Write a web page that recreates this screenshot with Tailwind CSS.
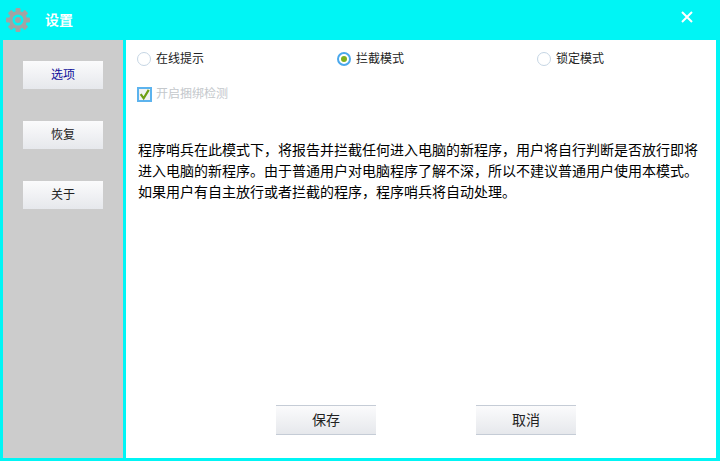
<!DOCTYPE html>
<html lang="zh-CN">
<head>
    <meta charset="UTF-8">
    <title>设置</title>
    <script src="https://cdn.jsdelivr.net/npm/@tailwindcss/browser@4"></script>
</head>
<body class="bg-[#00f5f5] font-['Liberation_Sans','Noto_Sans_CJK_SC',sans-serif] text-[12px] text-black overflow-hidden">
    <div class="w-[720px] h-[461px] flex flex-col pl-[3px] pr-[4px] pb-[3px]">
        <!-- Title bar -->
        <div class="h-[40px] shrink-0 flex items-center -ml-[3px] -mr-[4px]">
            <svg class="w-[24px] h-[24px] ml-[6px]" viewBox="0 0 24 24">
                <g fill="#a3a3a3">
                    <rect x="9.5" y="0" width="5" height="24" rx="1"/>
                    <rect x="9.5" y="0" width="5" height="24" rx="1" transform="rotate(45 12 12)"/>
                    <rect x="9.5" y="0" width="5" height="24" rx="1" transform="rotate(90 12 12)"/>
                    <rect x="9.5" y="0" width="5" height="24" rx="1" transform="rotate(135 12 12)"/>
                </g>
                <circle cx="12" cy="12" r="7" fill="none" stroke="#a3a3a3" stroke-width="4"/>
                <circle cx="12" cy="12" r="5.5" fill="#00f5f5"/>
                <circle cx="12" cy="12" r="3" fill="#a3a3a3"/>
            </svg>
            <span class="ml-[15px] text-[14px] font-bold text-white">设置</span>
            <svg class="w-[12px] h-[12px] ml-auto mr-[27px] -mt-[6px]" viewBox="0 0 12 12">
                <path d="M1 1 L11 11 M11 1 L1 11" stroke="#fff" stroke-width="2"/>
            </svg>
        </div>

        <div class="flex-1 flex min-h-0">
            <!-- Sidebar -->
            <div class="w-[120px] shrink-0 bg-[#cccccc] flex flex-col items-center pt-[21px] gap-[32px]">
                <button class="w-[80px] h-[28px] bg-gradient-to-b from-[#fbfbfc] to-[#e6e8ec] text-[#10109a]">选项</button>
                <button class="w-[80px] h-[28px] bg-gradient-to-b from-[#fbfbfc] to-[#e6e8ec] text-[#222]">恢复</button>
                <button class="w-[80px] h-[28px] bg-gradient-to-b from-[#fbfbfc] to-[#e6e8ec] text-[#222]">关于</button>
            </div>

            <!-- Main panel -->
            <div class="flex-1 ml-[3px] bg-white flex flex-col">
                <div class="flex pl-[11px] pt-[12px] h-[37px]">
                    <label class="w-[200px] flex items-center gap-[5px] h-[14px]">
                        <span class="w-[14px] h-[14px] rounded-full border border-[#c6d6e4]"></span>
                        <span class="text-[#222]">在线提示</span>
                    </label>
                    <label class="w-[200px] flex items-center gap-[5px] h-[14px]">
                        <span class="w-[14px] h-[14px] rounded-full border-2 border-[#4aa8ec] flex items-center justify-center">
                            <span class="w-[6px] h-[6px] rounded-full bg-[#7fb01c]"></span>
                        </span>
                        <span class="text-[#222]">拦截模式</span>
                    </label>
                    <label class="flex items-center gap-[5px] h-[14px]">
                        <span class="w-[14px] h-[14px] rounded-full border border-[#c6d6e4]"></span>
                        <span class="text-[#222]">锁定模式</span>
                    </label>
                </div>

                <label class="flex items-center gap-[4px] pl-[11px] h-[14px] mt-[10px]">
                    <span class="w-[15px] h-[15px] border-2 border-[#5cb3ee] bg-[#f2f2f2] flex items-center justify-center">
                        <svg class="w-[13px] h-[13px]" viewBox="0 0 13 13">
                            <path d="M2 6 L5.5 11 L11.5 1" fill="none" stroke="#6f9f12" stroke-width="2.6"/>
                        </svg>
                    </span>
                    <span class="text-[#c4c8cc]">开启捆绑检测</span>
                </label>

                <p class="w-[570px] ml-[12px] mt-[39px] text-[14px] leading-[21px] text-black">程序哨兵在此模式下，将报告并拦截任何进入电脑的新程序，用户将自行判断是否放行即将进入电脑的新程序。由于普通用户对电脑程序了解不深，所以不建议普通用户使用本模式。如果用户有自主放行或者拦截的程序，程序哨兵将自动处理。</p>

                <div class="mt-auto flex pl-[150px] gap-[100px] pb-[23px]">
                    <button class="w-[100px] h-[30px] border-y border-y-[#c5ccd6] bg-gradient-to-b from-[#fbfbfc] to-[#e6e8ec] text-[14px] text-[#222]">保存</button>
                    <button class="w-[100px] h-[30px] border-y border-y-[#c5ccd6] bg-gradient-to-b from-[#fbfbfc] to-[#e6e8ec] text-[14px] text-[#222]">取消</button>
                </div>
            </div>
        </div>
    </div>
</body>
</html>
